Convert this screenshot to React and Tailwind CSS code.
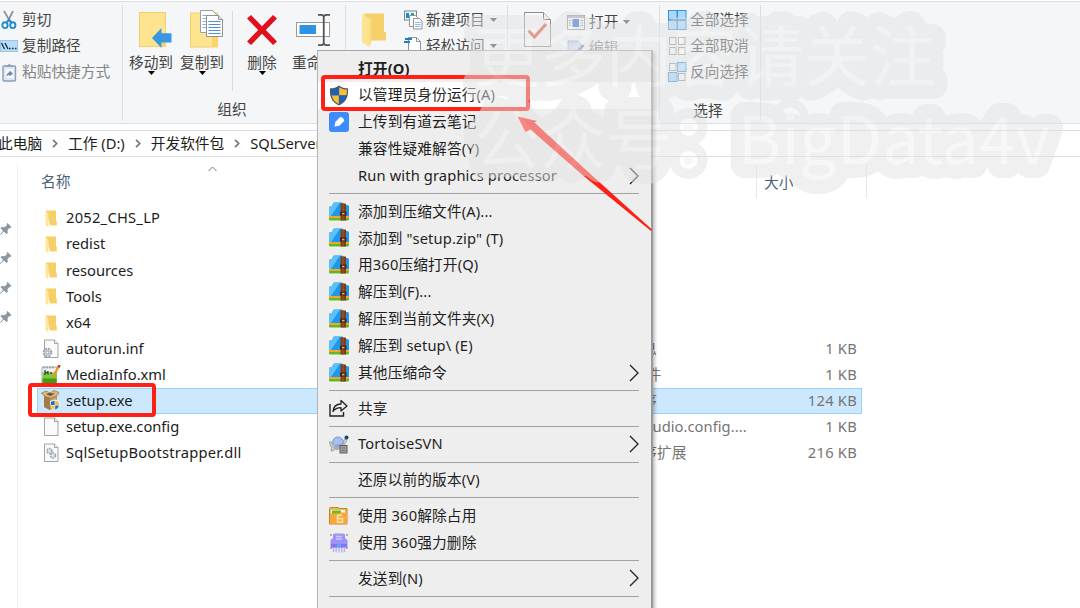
import React from "react";

const CaretDown = ({ className = "" }) => (
  <svg className={`shrink-0 ${className}`} width="7" height="4" viewBox="0 0 7 4">
    <path d="M0 0h7L3.5 4z" fill="currentColor" />
  </svg>
);

const Scissors = () => (
  <svg className="shrink-0" width="16" height="20" viewBox="0 0 16 20">
    <path d="M3 1l7 12M12 1L6 13" stroke="#8b9299" strokeWidth="1.7" fill="none" />
    <ellipse cx="4" cy="15.2" rx="2.6" ry="2.9" fill="none" stroke="#1f8ccf" strokeWidth="1.9" />
    <ellipse cx="11.8" cy="15.2" rx="2.6" ry="2.9" fill="none" stroke="#1f8ccf" strokeWidth="1.9" />
    <path d="M6 12l2-2.5 2.5 3" stroke="#1f8ccf" strokeWidth="1.8" fill="none" />
  </svg>
);

const PathIcon = () => (
  <svg className="shrink-0" width="18" height="12" viewBox="0 0 18 12">
    <rect x="0.5" y="0.5" width="17" height="11" fill="#b5ddfa" stroke="#9cc6e6" />
    <path d="M1.5 3l3 6M5 3l3 6" stroke="#1d2b3a" strokeWidth="1.3" />
    <path d="M9 8.5h1.6M12 8.5h1.6M15 8.5h1.4" stroke="#1d2b3a" strokeWidth="1.4" />
  </svg>
);

const PasteShortcut = () => (
  <svg className="shrink-0" width="15" height="19" viewBox="0 0 15 19">
    <rect x="1" y="3" width="12.5" height="15" rx="1" fill="#dfe6f2" stroke="#8b9cbd" strokeWidth="1.4" />
    <path d="M4 3.5V2h2L7.2.5 8.5 2h2v1.5z" fill="#8b9cbd" />
    <rect x="3.5" y="6" width="8" height="9" fill="#f7f9fc" />
    <path d="M4.5 14c0-3 1-4.5 3-4.8V7.5l3.5 3-3.5 3v-1.8C6 11.8 5.2 12.6 4.500 14z" fill="#6f84ae" />
  </svg>
);

const FolderMove = () => (
  <svg width="33" height="36" viewBox="0 0 33 36">
    <rect x="0.5" y="0.5" width="26" height="34" fill="#ffe490" stroke="#f3cf6b" />
    <path d="M23 24l4-4.500v15h-4z" fill="#f9d569" />
    <path d="M13 26l9.500-10v5.300H32.500v9.300H22.500V36z" fill="#3a97e4" />
  </svg>
);

const FolderCopy = () => (
  <svg width="33" height="38" viewBox="0 0 33 38">
    <rect x="0.500" y="3" width="27" height="34" fill="#ffe490" stroke="#f3cf6b" />
    <path d="M22 28l5.500-6v15H22z" fill="#f9d569" />
    <path d="M10.500.5h12l4 4v18h-16z" fill="#fff" stroke="#9b9fa5" />
    <path d="M12.500 5.500h10M12.500 8.500h10M12.500 11.500h10M12.500 14.500h10M12.500 17.500h10" stroke="#7cabe8" strokeWidth="1.200" />
    <path d="M16.500 5.500h12l4 4v17h-16z" fill="#fff" stroke="#8d9197" />
    <path d="M28.500 5.500v4h4" fill="#e5e5e5" stroke="#8d9197" />
    <path d="M18.500 11.500h12M18.500 14.500h12M18.500 17.500h12M18.500 20.500h12M18.500 23.500h12" stroke="#4d8de0" strokeWidth="1.200" />
  </svg>
);

const DeleteIcon = () => (
  <svg width="30" height="30" viewBox="0 0 30 30">
    <path d="M4 0l11 11.300L26 0l4 3.500L18.800 15 30 26.500 26 30 15 18.800 4 30 0 26.500 11.200 15 0 3.500z" fill="#e0101c" />
  </svg>
);

const RenameIcon = () => (
  <svg width="36" height="32" viewBox="0 0 36 32">
    <rect x="0.500" y="8.500" width="33" height="14" fill="#fff" stroke="#9a9a9a" />
    <rect x="3.500" y="11" width="16.500" height="9" fill="#2f93e3" />
    <path d="M22 .8h2.500c2 0 3.200.7 3.200 2.200v26c0 1.500-1.200 2.200-3.200 2.200H22M34 .8h-3c-2 0-3.200.7-3.200 2.200v26c0 1.500 1.200 2.200 3.200 2.200h3" stroke="#555" strokeWidth="1.700" fill="none" />
  </svg>
);

const FolderBig = () => (
  <svg width="24" height="34" viewBox="0 0 24 34">
    <path d="M2 0.500h20v18l2 1v8H8z" fill="#f6d06b" />
    <path d="M0 1l7 4.500V34l-7-5z" fill="#fde493" />
    <path d="M7 5.500V34l2.500-5V4z" fill="#fbdb7c" />
  </svg>
);

const NewItem = () => (
  <svg className="shrink-0" width="19" height="20" viewBox="0 0 19 20">
    <rect x="0.500" y="1" width="12" height="9" fill="#eef7fb" stroke="#7b858c" />
    <rect x="2" y="3" width="3" height="5" fill="#1c8bd0" /><rect x="7" y="3" width="3" height="4" fill="#2f9b86" />
    <path d="M5.500 5.500h6l2 2v9h-8z" fill="#fff" stroke="#8f949b" />
    <path d="M9.500 8.500h6l2.500 2.500v8h-8.500z" fill="#fff" stroke="#8f949b" />
    <path d="M11 12.500h5.500M11 14.500h5.500M11 16.500h5.500" stroke="#93b9e8" />
  </svg>
);

const EasyAccess = () => (
  <svg className="shrink-0" width="19" height="20" viewBox="0 0 19 20">
    <path d="M4.500 1.500h8l4 4v14h-12z" fill="#fff" stroke="#8f949b" />
    <path d="M12.500 1.500v4h4" fill="none" stroke="#8f949b" />
    <path d="M1 3h7M0 6h6" stroke="#1b7fc4" strokeWidth="2" />
  </svg>
);

const Properties = () => (
  <svg width="27" height="36" viewBox="0 0 27 36">
    <path d="M.5.5h19l7 7v27H.5z" fill="#f8f8f8" stroke="#8e8e8e" />
    <path d="M19.500.5v7h7" fill="#eee" stroke="#8e8e8e" />
    <path d="M4.500 18.500l6 6.500 11.500-13" fill="none" stroke="#dd5138" strokeWidth="3" />
  </svg>
);

const OpenIcon = () => (
  <svg className="shrink-0" width="18" height="15" viewBox="0 0 18 15">
    <rect x="0.500" y="0.500" width="17" height="14" fill="#f5f7fa" stroke="#8d949c" />
    <path d="M1 2h16" stroke="#a8b0b8" strokeWidth="2" />
    <rect x="5.500" y="4" width="6.500" height="8" fill="#2d69c9" />
    <path d="M2 5.500h2M2 8h2M2 10.500h2M13.500 5.500h2.500M13.500 8h2.500M13.500 10.500h2.500" stroke="#8d949c" />
  </svg>
);

const EditIcon = () => (
  <svg className="shrink-0" width="18" height="16" viewBox="0 0 18 16">
    <path d="M1 1h10l3 3v11H1z" fill="#c9d6ec" stroke="#9eb0d0" />
    <path d="M16.500 5l-5 6" stroke="#6f8fc0" strokeWidth="2.500" />
  </svg>
);

const SelectIcon = ({ cells }) => (
  <svg className="shrink-0" width="19" height="20" viewBox="0 0 19 20">
    {cells.map((on, i) => {
      const x = i % 2 ? 9.5 : 0.5;
      const y = i > 1 ? 10.5 : 0.5;
      return on ? (
        <rect key={i} x={x} y={y} width="8.500" height="9" fill="#a9d8fb" stroke="#3b90d8" />
      ) : (
        <rect key={i} x={x + 1} y={y + 1} width="6.500" height="7" fill="#fbfbfb" stroke="#999" />
      );
    })}
  </svg>
);

const FileFolder = () => (
  <svg className="mt-[2px]" width="13" height="18" viewBox="0 0 13 18">
    <path d="M1 .5h10v10l.8.6V15.500H5z" fill="#f6cf66" />
    <path d="M.5 1l3 2.500V17.500L.5 15z" fill="#fde59b" />
  </svg>
);

const Sheet = ({ children }) => (
  <svg width="18" height="20" viewBox="0 0 18 20">
    <path d="M2.500 1h10l3.500 3.500v14h-13.500z" fill="#fafafa" stroke="#a3a3a3" />
    <path d="M12.500 1v3.500H16" fill="#eee" stroke="#a3a3a3" />
    {children}
  </svg>
);

const InfIcon = () => (
  <Sheet>
    <circle cx="5.500" cy="13.500" r="3.800" fill="#dbe4ec" stroke="#9aa9b7" strokeWidth="2.200" strokeDasharray="2 1" />
    <circle cx="5.500" cy="13.500" r="1.600" fill="#fff" stroke="#8696a5" />
  </Sheet>
);
const DllIcon = () => (
  <Sheet>
    <circle cx="7.500" cy="8" r="2.400" fill="#e7ebef" stroke="#9ba7b3" strokeWidth="1.800" strokeDasharray="1.600 .8" />
    <circle cx="11" cy="12.500" r="2.400" fill="#e7ebef" stroke="#9ba7b3" strokeWidth="1.800" strokeDasharray="1.600 .8" />
  </Sheet>
);
const XmlIcon = () => (
  <svg width="20" height="20" viewBox="0 0 20 20">
    <path d="M1 2h14.500v17H1z" fill="#f0f2ee" stroke="#a9aeb0" />
    <path d="M1.500 7.500h14v11h-14z" fill="#7bcb3a" /><path d="M1.500 13.500h14v5h-14z" fill="#3f9c1d" />
    <path d="M4 5v5M4 7.500h3M7 6v3.500M9 8h2" stroke="#37474a" strokeWidth="1.400" />
    <path d="M3 1.500v2M6 1.500v2M9 1.500v2M12 1.500v2" stroke="#70777a" />
    <path d="M18 1l-6.500 11.500" stroke="#e99a22" strokeWidth="2.400" /><path d="M18.700 0l-1.300 2.300" stroke="#b6402a" strokeWidth="2.400" />
  </svg>
);
const Shield = ({ size = 20, height = 21 }) => (
  <svg width={size} height={height} viewBox="0 0 20 21">
    <path d="M10 .5C7.500 2.600 4.500 3.300 1 3.300c-.5 7.700 1 13.500 9 17.200 8-3.700 9.500-9.500 9-17.200-3.500 0-6.500-.7-9-2.800z" fill="#4d5a66" />
    <path d="M9.800 2.300v8H2.600C2.200 8.600 2 6.700 2.100 4.600c2.800 0 5.500-.7 7.700-2.300z" fill="#1a62c0" />
    <path d="M10.200 2.300v8h7.200c.4-1.700.6-3.600.5-5.700-2.800 0-5.500-.7-7.700-2.300z" fill="#fcbf34" />
    <path d="M9.800 10.600v8.600c-3.800-1.800-6.100-4.600-7.100-8.600z" fill="#fcbf34" />
    <path d="M10.200 10.600v8.600c3.800-1.800 6.100-4.600 7.100-8.600z" fill="#1a62c0" />
  </svg>
);
const SetupIcon = () => (
  <svg width="20" height="21" viewBox="0 0 20 21">
    <path d="M3 6l6 2 7-2v10l-7 4-6-3z" fill="#c09a63" /><path d="M3 6l6 2v12l-6-3z" fill="#a37b47" />
    <path d="M3 6L.5 3 5 1l4 2 4-2.500L18 2.500 16 6l-7 2z" fill="#d9b983" stroke="#94713f" strokeWidth=".7" />
    <path d="M5 4l4-1 5 .8L9 6z" fill="#6f512b" />
    <g transform="translate(8.500 9.500) scale(.54)">
      <path d="M10 0L1 3c0 8 1 13.500 9 17.500C18 16.500 19 11 19 3z" fill="#fff" />
      <path d="M9.500 2v8H2.500V4zM10.500 11v8c4-2 6-4 7-8z" fill="#1d6dc6" /><path d="M10.500 2v8h7V4zM9.500 11v8c-4-2-6-4-7-8z" fill="#f6bf3a" />
    </g>
  </svg>
);

const ZipIcon = () => (
  <svg width="20" height="20" viewBox="0 0 20 20">
    <rect width="20" height="20" rx="1" fill="#f7f3ea" />
    <path d="M0 15.500h20v2q0 1-1 1H1q-1 0-1-1z" fill="#5fb92f" />
    <path d="M0 13h20v3H0z" fill="#f6a81d" />
    <path d="M0 6q0-2 2-2h1l1-2.500Q4.300.5 5.500.5h7.500q1 0 1.300 1L15 3h3.500q1.500 0 1.500 1.500V14H0z" fill="#1f97ea" />
    <path d="M0 6q0-2 2-2h1l1-2.500Q4.300.5 5.500.5H11L2 14H0z" fill="#5cc0fa" />
    <path d="M11.500 1.500h5.500v17h-5.500z" fill="#7a3f1d" /><path d="M13.500 1.500h1v17h-1z" fill="#a05b2d" />
    <path d="M11 9.500h6.500v4H11z" fill="#4a2410" /><path d="M13 10.800h2.500v1.600H13z" fill="#e0b06a" />
  </svg>
);
const NoteIcon = () => (
  <svg width="20" height="20" viewBox="0 0 20 20">
    <rect width="20" height="20" rx="3" fill="#3d8bfd" />
    <path d="M5.500 14.500l.8-4.500 4.800-5q3.500 0 4.200 3.800l-5 4.900z" fill="#fff" />
  </svg>
);
const ShareIcon = () => (
  <svg width="20" height="18" viewBox="0 0 20 18">
    <path d="M1 5v12h13.500v-4" fill="none" stroke="#222" strokeWidth="1.400" />
    <path d="M4 12.500c.5-5 3-7.500 8-7.500V1.500l6 5.500-6 5V8.700c-4 0-6 .8-8 3.800z" fill="none" stroke="#222" strokeWidth="1.300" strokeLinejoin="round" />
  </svg>
);
const TortoiseIcon = () => (
  <svg width="20" height="19" viewBox="0 0 20 19">
    <path d="M0 7q2-1 3 1l2 4 1 2-2 2H2l.5-3z" fill="#c3cbd0" stroke="#8a969e" strokeWidth=".7" />
    <path d="M13 9l2.500-5h2l.5 1-3 6z" fill="#c3cbd0" stroke="#8a969e" strokeWidth=".6" />
    <path d="M4 11l7-1v4l-4 1.500z" fill="#a3adb4" />
    <path d="M3.500 8Q4 2 9 2t5.500 6.500L12 10l-6 .5z" fill="#a3bff2" stroke="#6e8bbd" strokeWidth=".8" />
    <circle cx="17.500" cy="2.500" r="2" fill="#124b66" />
    <rect x="11" y="10.500" width="7" height="7.500" fill="#a3a19e" stroke="#5f5c58" /><path d="M12.500 13h4M12.500 15.500h4" stroke="#75726e" />
  </svg>
);
const UnlockIcon = () => (
  <svg width="19" height="18" viewBox="0 0 19 18">
    <path d="M.5 1.500Q.5.500 2 .5h7l1.500 1H18v15.500H.5z" fill="#f4b942" stroke="#b98b2d" />
    <path d="M2 3h14v3H2z" fill="#fff6df" /><path d="M3 3.500h9v3H3z" fill="#5ebc3b" />
    <path d="M1 7h9l2-1.500h6V17H1z" fill="#fba63a" />
    <path d="M8.500 15V9.500q0-1.500 2-1.500t2 1M8.500 11.500h5v3.500h-5z" fill="none" stroke="#ffe6ad" strokeWidth="1.500" />
  </svg>
);
const ShredIcon = () => (
  <svg width="20" height="20" viewBox="0 0 20 20">
    <path d="M1 2h2M17 2h2M1 15h2M17 15h2" stroke="#b4a445" strokeWidth="1.500" />
    <path d="M4 2Q4 .5 5.500.5h9Q16 .5 16 2v3l2.500 2v6.500q0 1-1 1h-15q-1 0-1-1V7L4 5z" fill="#9d92f8" />
    <path d="M7 3.500h6M7 6h6" stroke="#cfc9ff" strokeWidth="1.300" /><path d="M2 11h16v3.500H2z" fill="#8375f2" />
    <path d="M8 12.500h4" stroke="#43c3f5" strokeWidth="2" />
    <path d="M4.500 15v4M7.200 15v4.500M10 15v4.500M12.800 15v4.500M15.500 15v4" stroke="#b9aefb" strokeWidth="1.500" />
  </svg>
);

const BigButton = ({ icon, label, caret, className = "" }) => (
  <div className={`flex shrink-0 flex-col items-center ${className}`}>
    <div className="flex h-10 items-center justify-center">{icon}</div>
    <div className="mt-[2px] h-5 leading-5">{label}</div>
    {caret && <CaretDown className="-mt-[1px] text-black" />}
  </div>
);

const SmallRow = ({ icon, label, caret, className = "" }) => (
  <div className={`flex h-[26px] items-center ${className}`}>
    <div className="flex w-[22px] shrink-0 items-center">{icon}</div>
    <span className="pb-[1px]">{label}</span>
    {caret && <CaretDown className="ml-[5px] text-[#444]" />}
  </div>
);

const Ribbon = () => (
  <div className="mt-px flex h-[123px] w-full shrink-0 border-y border-[#dcdee0] bg-[#f4f6f8] pt-[3px] text-[#444]">
    <div className="mb-[2px] w-[123px] shrink-0 border-r border-[#dcdee0] pt-[2px]">
      <SmallRow icon={<div className="pl-[1px]"><Scissors /></div>} label="剪切" />
      <SmallRow icon={<PathIcon />} label="复制路径" />
      <SmallRow icon={<div className="pl-[2px]"><PasteShortcut /></div>} label="粘贴快捷方式" className="text-[#858585]" />
    </div>
    <div className="mb-[2px] flex w-[223px] shrink-0 flex-col border-r border-[#dcdee0]">
      <div className="flex h-[90px] pt-[5px]">
        <BigButton className="ml-[3px] w-[50px]" icon={<div className="pl-2"><FolderMove /></div>} label="移动到" caret />
        <BigButton className="ml-[1px] w-[50px]" icon={<div className="pb-[2px] pl-2"><FolderCopy /></div>} label="复制到" caret />
        <div className="ml-[5px] mt-[1px] h-20 w-px bg-[#d9dbdd]" />
        <BigButton className="ml-[9px] w-[40px]" icon={<DeleteIcon />} label="删除" caret />
        <BigButton className="ml-[5px] w-[54px]" icon={<RenameIcon />} label="重命名" />
      </div>
      <div className="mt-[2px] h-6 pr-[4px] text-center leading-6">组织</div>
    </div>
    <div className="mb-[2px] flex w-[162px] shrink-0 border-r border-[#dcdee0]">
      <div className="ml-[16px] mt-2 w-6"><FolderBig /></div>
      <div className="ml-[18px] pt-[2px]">
        <SmallRow icon={<NewItem />} label="新建项目" caret />
        <SmallRow icon={<EasyAccess />} label="轻松访问" caret />
      </div>
    </div>
    <div className="mb-[2px] flex w-[152px] shrink-0 border-r border-[#dcdee0]">
      <div className="ml-[16px] mt-[7px]"><Properties /></div>
      <div className="ml-4 pt-[4px]">
        <SmallRow icon={<OpenIcon />} label="打开" caret />
        <SmallRow icon={<EditIcon />} label="编辑" className="text-[#858585]" />
      </div>
    </div>
    <div className="mb-[2px] w-[101px] shrink-0 border-r border-[#dcdee0] pl-[8px] pt-[2px]">
      <SmallRow icon={<SelectIcon cells={[1, 1, 1, 1]} />} label="全部选择" />
      <SmallRow icon={<SelectIcon cells={[0, 0, 0, 0]} />} label="全部取消" />
      <SmallRow icon={<SelectIcon cells={[0, 1, 1, 0]} />} label="反向选择" />
      <div className="mt-[13px] h-6 pr-[12px] text-center leading-6">选择</div>
    </div>
  </div>
);

const Crumb = () => (
  <svg className="mx-[10px] shrink-0" width="6" height="9" viewBox="0 0 6 9">
    <path d="M1 .8l3.700 3.700L1 8.200" fill="none" stroke="#777" strokeWidth="1.700" />
  </svg>
);

const Pin = () => (
  <svg width="12" height="13" viewBox="0 0 12 13">
    <path d="M7.500 0l4 4-1 1-.8-.3-2.200 2.500.3 2.800-1.300 1L3.800 8.500.5 12 0 11.500 3 7.800.5 5.300 1.700 4l2.800.3L7 2.200 6.600 1z" fill="#8a98a3" />
  </svg>
);

const files = [
  ["2052_CHS_LP", <FileFolder />, "", ""],
  ["redist", <FileFolder />, "", ""],
  ["resources", <FileFolder />, "", ""],
  ["Tools", <FileFolder />, "", ""],
  ["x64", <FileFolder />, "", ""],
  ["autorun.inf", <InfIcon />, "安装信息", "1 KB"],
  ["MediaInfo.xml", <XmlIcon />, "XML 文件", "1 KB"],
  ["setup.exe", <SetupIcon />, "应用程序", "124 KB"],
  ["setup.exe.config", <Sheet />, "VisualStudio.config....", "1 KB"],
  ["SqlSetupBootstrapper.dll", <DllIcon />, "应用程序扩展", "216 KB"],
];

const nameTracking = {
  "2052_CHS_LP": "tracking-[0.25px]",
  "SqlSetupBootstrapper.dll": "tracking-[0.22px]",
};

const FileRow = ({ name, icon, type, size }) => (
  <div className={`flex h-[26.13px] w-[825px] items-center border ${name === "setup.exe" ? "border-[#99d1ff] bg-[#cce8ff]" : "border-transparent"}`}>
    <div className="flex w-[28px] shrink-0 justify-center pr-[2px]">{icon}</div>
    <div className={`w-[532px] shrink-0 pb-[1.500px] text-[#1c1c1c] ${nameTracking[name] || ""}`}>{name}</div>
    <div className="w-[159px] shrink-0 pb-[1.500px] tracking-[0.05px] text-[#757575]">{type}</div>
    <div className="w-[100px] shrink-0 pb-[1.500px] text-right tracking-[0.25px] text-[#757575]">{size}</div>
  </div>
);

const Chevron = () => (
  <svg className="mr-[12px]" width="10" height="18" viewBox="0 0 10 18">
    <path d="M1 1l8 8-8 8" fill="none" stroke="#222" strokeWidth="1.300" />
  </svg>
);

const menu = [
  { t: "打开(O)", bold: true },
  { t: "以管理员身份运行(A)", icon: <Shield />, hot: true },
  { t: "上传到有道云笔记", icon: <NoteIcon /> },
  { t: "兼容性疑难解答(Y)" },
  { t: "Run with graphics processor", sub: true },
  null,
  { t: "添加到压缩文件(A)...", icon: <ZipIcon /> },
  { t: "添加到 \"setup.zip\" (T)", icon: <ZipIcon /> },
  { t: "用360压缩打开(Q)", icon: <ZipIcon /> },
  { t: "解压到(F)...", icon: <ZipIcon /> },
  { t: "解压到当前文件夹(X)", icon: <ZipIcon /> },
  { t: "解压到 setup\\ (E)", icon: <ZipIcon /> },
  { t: "其他压缩命令", icon: <ZipIcon />, sub: true },
  null,
  { t: "共享", icon: <ShareIcon /> },
  null,
  { t: "TortoiseSVN", icon: <TortoiseIcon />, sub: true },
  null,
  { t: "还原以前的版本(V)" },
  null,
  { t: "使用 360解除占用", icon: <UnlockIcon /> },
  { t: "使用 360强力删除", icon: <ShredIcon /> },
  null,
  { t: "发送到(N)", sub: true },
  null,
];

const ContextMenu = () => (
  <div className="absolute left-[317px] top-[50px] h-[570px] w-[336px] border-l border-r-2 border-t border-l-[#b5b5b5] border-r-[#999] border-t-[#a5a5a5] bg-[#eeeeee] pt-[4px] text-[#1f1f1f] shadow-[2px_3px_3px_rgba(0,0,0,0.25)]">
    {menu.map((m, i) =>
      m ? (
        <div key={i} className={`flex h-[26.83px] items-center ${m.hot ? "bg-white" : ""}`}>
          <div className="flex w-[40px] shrink-0 items-center justify-center pl-[1px]">{m.icon}</div>
          <div className={`flex-1 pb-[1.500px] tracking-[0.13px] ${m.bold ? "font-bold" : ""}`}>{m.t}</div>
          {m.sub && <Chevron />}
        </div>
      ) : (
        <div key={i} className="flex h-[9px] items-center pl-[11px] pr-[12px]">
          <div className="h-px w-full bg-[#a2a2a2]" />
        </div>
      )
    )}
  </div>
);

const Watermark = () => (
  <svg
    className="pointer-events-none absolute left-0 top-0 font-['Noto_Sans_CJK_SC',sans-serif] text-[66px] opacity-50"
    width="1080"
    height="200"
    viewBox="0 0 1080 200"
    fill="#f0f0f0"
    stroke="#e3e3e3"
    strokeWidth="28"
    strokeLinejoin="round"
    strokeLinecap="round"
    paintOrder="stroke"
  >
    <text x="474" y="81">更多内容请关注</text>
    <text x="474" y="164">公众号：BigData4v</text>
  </svg>
);

export default function App() {
  return (
    <div className="relative flex h-[608px] w-[1080px] flex-col overflow-hidden whitespace-nowrap bg-white font-['Noto_Sans','Noto_Sans_CJK_SC',sans-serif] text-[14.7px]">
      <Ribbon />
      <div className="mt-[6px] flex h-[27px] w-full shrink-0 items-center border-y border-[#dcdcdc] text-[#1c1c1c]">
        <span className="-ml-[2px]">此电脑</span><Crumb />
        <span>工作 (D:)</span><Crumb />
        <span>开发软件包</span><Crumb />
        <span>SQLServer</span>
      </div>
      <div className="flex min-h-0 flex-1">
        <div className="mt-2 flex w-[18px] shrink-0 flex-col gap-[16.4px] border-r border-[#efefef] pt-[58px]">
          <Pin /><Pin /><Pin /><Pin />
        </div>
        <div className="flex flex-col pl-[19px]">
          <div className="flex h-[48px] shrink-0 items-center text-[#4c607a]">
            <div className="ml-[4px] w-[167px] pt-[1px]">名称</div>
            <svg className="-mt-[24px]" width="9" height="6" viewBox="0 0 9 6"><path d="M.5 5l4-4 4 4" fill="none" stroke="#777" /></svg>
            <div className="ml-[539px] h-[33px] w-[111px] border-x border-[#e8e8e8] pl-[7px] leading-[34px]">大小</div>
          </div>
          {files.map(([name, icon, type, size]) => (
            <FileRow key={name} name={name} icon={icon} type={type} size={size} />
          ))}
        </div>
      </div>
      <ContextMenu />
      <div className="absolute left-[321px] top-[75px] h-[36px] w-[209px] rounded-[4px] border-4 border-[#ff1f14]" />
      <div className="absolute left-[28px] top-[383px] h-[34px] w-[128px] rounded-[4px] border-4 border-[#ff1f14]" />
      <svg className="absolute left-[510px] top-[110px]" width="145" height="125" viewBox="510 110 145 125">
        <path d="M517.500 116.500L537 121l-2.500 1.500L586 170l66 59.500-1 1.500L582.500 175l-52-45.500-5 2.500z" fill="#ff1f14" />
      </svg>
      <Watermark />
    </div>
  );
}
